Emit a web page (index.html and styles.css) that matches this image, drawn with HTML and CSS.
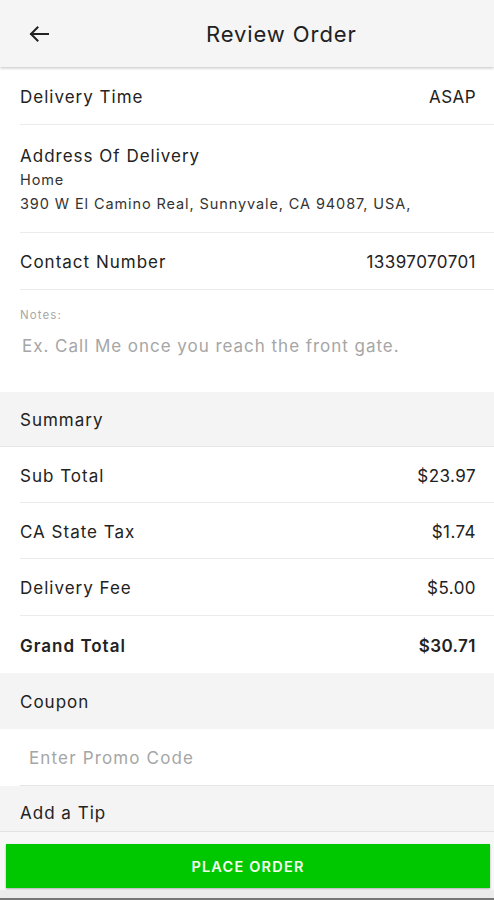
FILE: index.html
```html
<!DOCTYPE html>
<html lang="en">
<head>
<meta charset="utf-8">
<title>Review Order</title>
<link rel="stylesheet" href="styles.css">
</head>
<body>
<div class="screen">
  <header class="topbar">
    <button class="back" aria-label="Back">
      <svg width="20" height="16" viewBox="0 0 20 16"><path d="M19 8H2M8.5 1.5L2 8l6.5 6.5" fill="none" stroke="#222" stroke-width="2" stroke-linecap="square"/></svg>
    </button>
    <h1 class="title">Review Order</h1>
  </header>

  <main class="content">
    <div class="row row-first">
      <span class="label">Delivery Time</span>
      <span class="value">ASAP</span>
    </div>
    <div class="address">
      <div class="label">Address Of Delivery</div>
      <div class="sub sub-first">Home</div>
      <div class="sub">390 W El Camino Real, Sunnyvale, CA 94087, USA,</div>
    </div>
    <div class="row">
      <span class="label">Contact Number</span>
      <span class="value">13397070701</span>
    </div>
    <div class="notes">
      <div class="notes-label">Notes:</div>
      <div class="notes-input">Ex. Call Me once you reach the front gate.</div>
    </div>

    <div class="section">Summary</div>
    <div class="row row-sum">
      <span class="label">Sub Total</span>
      <span class="value">$23.97</span>
    </div>
    <div class="row row-sum">
      <span class="label">CA State Tax</span>
      <span class="value">$1.74</span>
    </div>
    <div class="row">
      <span class="label">Delivery Fee</span>
      <span class="value">$5.00</span>
    </div>
    <div class="row row-total">
      <span class="label">Grand Total</span>
      <span class="value">$30.71</span>
    </div>

    <div class="section section-plain">Coupon</div>
    <div class="promo">
      <span class="promo-input">Enter Promo Code</span>
    </div>
    <div class="section section-tip">Add a Tip</div>
  </main>

  <footer class="bottombar">
    <button class="place">PLACE ORDER</button>
  </footer>
  <div class="navstrip"></div>
</div>
</body>
</html>
```
FILE: styles.css
```css
* { box-sizing: border-box; }
html, body { margin: 0; padding: 0; background: #fff; }
body {
  font-family: "Inter", "Lato", sans-serif;
  color: #222;
  width: 494px;
  height: 900px;
  overflow: hidden;
}
.screen { display: flex; flex-direction: column; height: 900px; }

.topbar {
  height: 67px;
  flex: none;
  background: #f5f5f5;
  display: flex;
  align-items: center;
  box-shadow: 0 1px 3px rgba(0,0,0,0.25);
  position: relative;
  z-index: 1;
}
.back {
  border: 0; background: none; padding: 0;
  margin-left: 29px;
  width: 20px; height: 16px;
  display: flex;
}
.title {
  margin: 1px 0 0 157px;
  font-weight: 400;
  font-size: 22px;
  letter-spacing: 0.9px;
  color: #222;
}

.content { flex: 1; display: flex; flex-direction: column; }

.row {
  height: 57px;
  flex: none;
  margin-left: 20px;
  padding: 2px 18px 0 0;
  border-bottom: 1px solid #ebebeb;
  display: flex;
  align-items: center;
  justify-content: space-between;
  font-size: 17px;
}
.row-first { height: 58px; padding-top: 3px; }
.label { font-size: 17px; letter-spacing: 1px; }
.value { font-size: 17px; letter-spacing: 0.45px; }
.row-sum { height: 56px; }
.row-total { font-weight: 600; border-bottom: 0; height: 57px; }

.address {
  margin-left: 20px;
  padding: 20px 0 19px;
  border-bottom: 1px solid #ebebeb;
  height: 108px;
}
.address .label { line-height: 22px; }
.sub { font-size: 14.5px; line-height: 24px; color: #333; letter-spacing: 0.9px; }
.sub-first { margin-top: 1px; }

.notes {
  height: 102px;
  padding: 18px 0 0 20px;
}
.notes-label { font-size: 11.5px; color: #a8a8a8; line-height: 14px; letter-spacing: 1.1px; }
.notes-input { font-size: 17px; color: #a6a6a6; margin: 13px 0 0 2px; line-height: 22px; letter-spacing: 0.97px; }

.section {
  height: 55px;
  flex: none;
  background: #f4f4f4;
  border-bottom: 1px solid #e6e6e6;
  padding: 2px 0 0 20px;
  display: flex;
  align-items: center;
  font-size: 17px;
  letter-spacing: 1px;
}
.section-plain { border-bottom: 0; height: 56px; }
.promo {
  height: 57px;
  flex: none;
  margin-left: 20px;
  border-bottom: 1px solid #e6e6e6;
  display: flex;
  align-items: center;
  padding: 2px 0 0 9px;
}
.promo-input { font-size: 17px; color: #a6a6a6; letter-spacing: 1.15px; }
.section-tip { height: 46px; border-bottom: 1px solid #e3e3e3; padding-top: 9px; }

.bottombar {
  flex: none;
  height: 58px;
  background: #f7f7f7;
  padding: 12px 4px 0 6px;
}
.place {
  width: 100%;
  height: 44px;
  border: 0;
  background: #00c800;
  color: #f4fff0;
  font-family: "Inter", "Lato", sans-serif;
  font-weight: 600;
  font-size: 14.5px;
  letter-spacing: 1.2px;
  box-shadow: 0 1px 2px rgba(0,0,0,0.3);
  display: block;
}
.navstrip {
  flex: 1;
  background: #ececec;
  border-bottom: 2px solid #777;
}
```
